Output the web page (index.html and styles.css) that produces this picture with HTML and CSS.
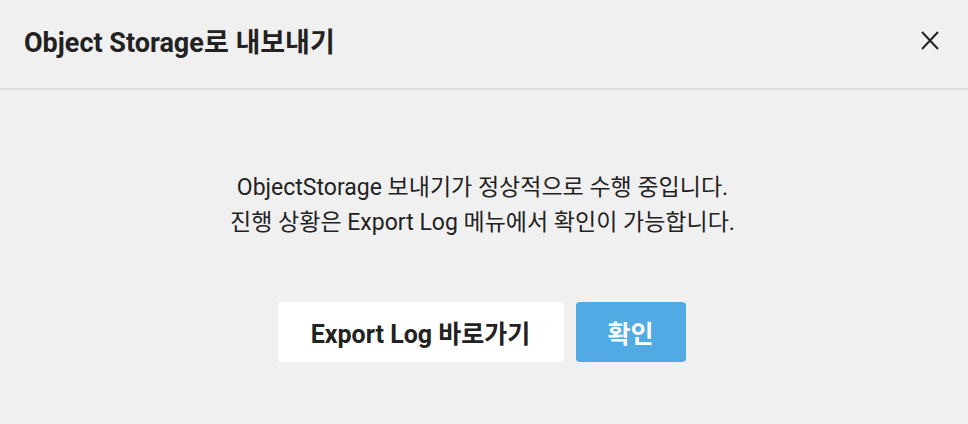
FILE: index.html
```html
<!DOCTYPE html>
<html>
<head>
<meta charset="utf-8"/>
<title>Object Storage로 내보내기</title>
<link rel="stylesheet" href="styles.css">
</head>
<body>
<div class="modal">
  <div class="modal-header">
    <h1 class="modal-title">Object Storage로 내보내기</h1>
    <button class="close-btn" aria-label="닫기">
      <svg width="18" height="19" viewBox="0 0 18 19">
        <path d="M1 1 L17 18 M17 1 L1 18" stroke="#222" stroke-width="2" fill="none"/>
      </svg>
    </button>
  </div>
  <div class="modal-body">
    <p class="message">ObjectStorage 보내기가 정상적으로 수행 중입니다.<br>진행 상황은 Export Log 메뉴에서 확인이 가능합니다.</p>
    <div class="actions">
      <button class="btn btn-default">Export Log 바로가기</button>
      <button class="btn btn-primary">확인</button>
    </div>
  </div>
</div>
</body>
</html>
```

FILE: styles.css
```css
body {
   margin: 0;
   background-color: #f0f0f0;
   font-family: Roboto, "Noto Sans CJK KR", sans-serif;
   color: #222;
}

.modal {
   width: 968px;
   height: 424px;
   background-color: #f0f0f0;
}

.modal-header {
   height: 90px;
   border-bottom: 2px solid #dedede;
   display: flex;
   align-items: center;
   justify-content: space-between;
   padding: 0 29px 8px 24px;
   box-sizing: border-box;
}

.modal-title {
   margin: 0;
   font-size: 27px;
   font-weight: 700;
   color: #222;
}

.close-btn {
   border: none;
   background: none;
   padding: 0;
   width: 18px;
   height: 19px;
   cursor: pointer;
   display: flex;
}

.modal-body {
   display: flex;
   flex-direction: column;
   align-items: center;
   padding-top: 80px;
}

.message {
   margin: 0 3px 0 0;
   text-align: center;
   font-size: 23px;
   line-height: 35px;
   color: #222;
}

.actions {
   display: flex;
   gap: 12px;
   margin: 62px 5px 0 0;
}

.btn {
   height: 60px;
   border: none;
   border-radius: 4px;
   font-family: Roboto, "Noto Sans CJK KR", sans-serif;
   font-size: 25px;
   font-weight: 700;
   cursor: pointer;
}

.btn-default {
   width: 286px;
   background-color: #fff;
   color: #222;
}

.btn-primary {
   width: 110px;
   background-color: #52aae4;
   color: #fff;
}
```
